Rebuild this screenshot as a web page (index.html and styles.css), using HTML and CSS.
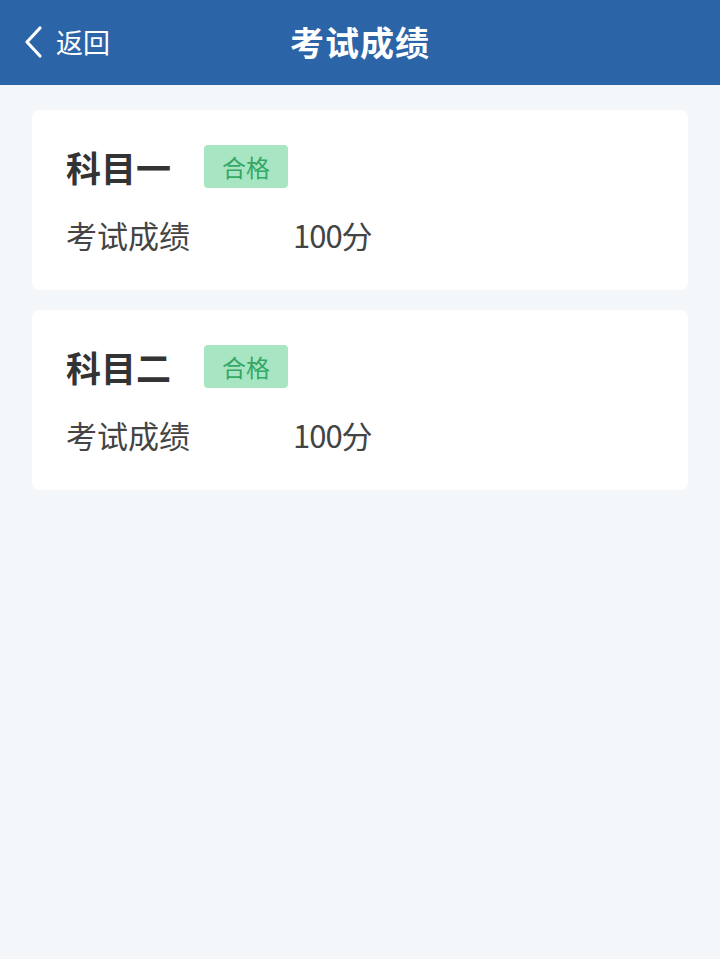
FILE: index.html
```html
<!DOCTYPE html>
<html lang="zh-CN">

<head>
    <meta charset="UTF-8">
    <meta name="viewport" content="width=device-width, initial-scale=1.0">
    <title>考试成绩</title>

    <link rel="stylesheet" href="styles.css">
</head>

<body>
    <div class="header">
        <div class="back">
            <svg class="back-icon" width="22" height="34" viewBox="0 0 22 34">
                <path d="M18 3 L5 17 L18 31" fill="none" stroke="#fff" stroke-width="3.2" stroke-linecap="round" stroke-linejoin="round" />
            </svg>
            <span>返回</span>
        </div>
        <div class="title">考试成绩</div>
    </div>

    <div class="list">
        <div class="card">
            <div class="card-head">
                <span class="name">科目一</span>
                <span class="tag">合格</span>
            </div>
            <div class="row">
                <span class="label">考试成绩</span>
                <span class="value">100分</span>
            </div>
        </div>
        <div class="card">
            <div class="card-head">
                <span class="name">科目二</span>
                <span class="tag">合格</span>
            </div>
            <div class="row">
                <span class="label">考试成绩</span>
                <span class="value">100分</span>
            </div>
        </div>
    </div>
</body>

</html>
```

FILE: styles.css
```css
* {
    margin: 0;
    padding: 0;
    box-sizing: border-box;
}

body {
    background: #f4f7f9;
    font-family: "Noto Sans CJK SC", "Noto Sans", sans-serif;
    min-height: 959px;
}

.header {
    height: 85px;
    background: #2c64a8;
    color: #fff;
    display: flex;
    align-items: center;
    justify-content: center;
    position: relative;
}

.back {
    position: absolute;
    left: 22px;
    top: 25px;
    display: flex;
    align-items: center;
    gap: 12px;
    font-size: 27px;
    line-height: 34px;
}

.back-icon {
    display: block;
}

.title {
    font-size: 34px;
    font-weight: bold;
    letter-spacing: 1px;
    margin-top: -2px;
}

.list {
    padding: 25px 32px;
    display: flex;
    flex-direction: column;
    gap: 20px;
}

.card {
    background: #fff;
    border-radius: 7px;
    height: 180px;
    padding: 35px 34px 0;
}

.card-head {
    display: flex;
    align-items: center;
    height: 43px;
}

.name {
    font-size: 35px;
    font-weight: bold;
    color: #333;
    width: 138px;
}

.tag {
    background: #a8e6c3;
    color: #35a866;
    font-size: 24px;
    line-height: 43px;
    padding: 0 18px;
    border-radius: 4px;
}

.row {
    display: flex;
    align-items: center;
    margin-top: 27px;
    font-size: 31px;
    line-height: 40px;
    color: #444;
}

.label {
    width: 227px;
}

.value {
    letter-spacing: -1px;
}
```
